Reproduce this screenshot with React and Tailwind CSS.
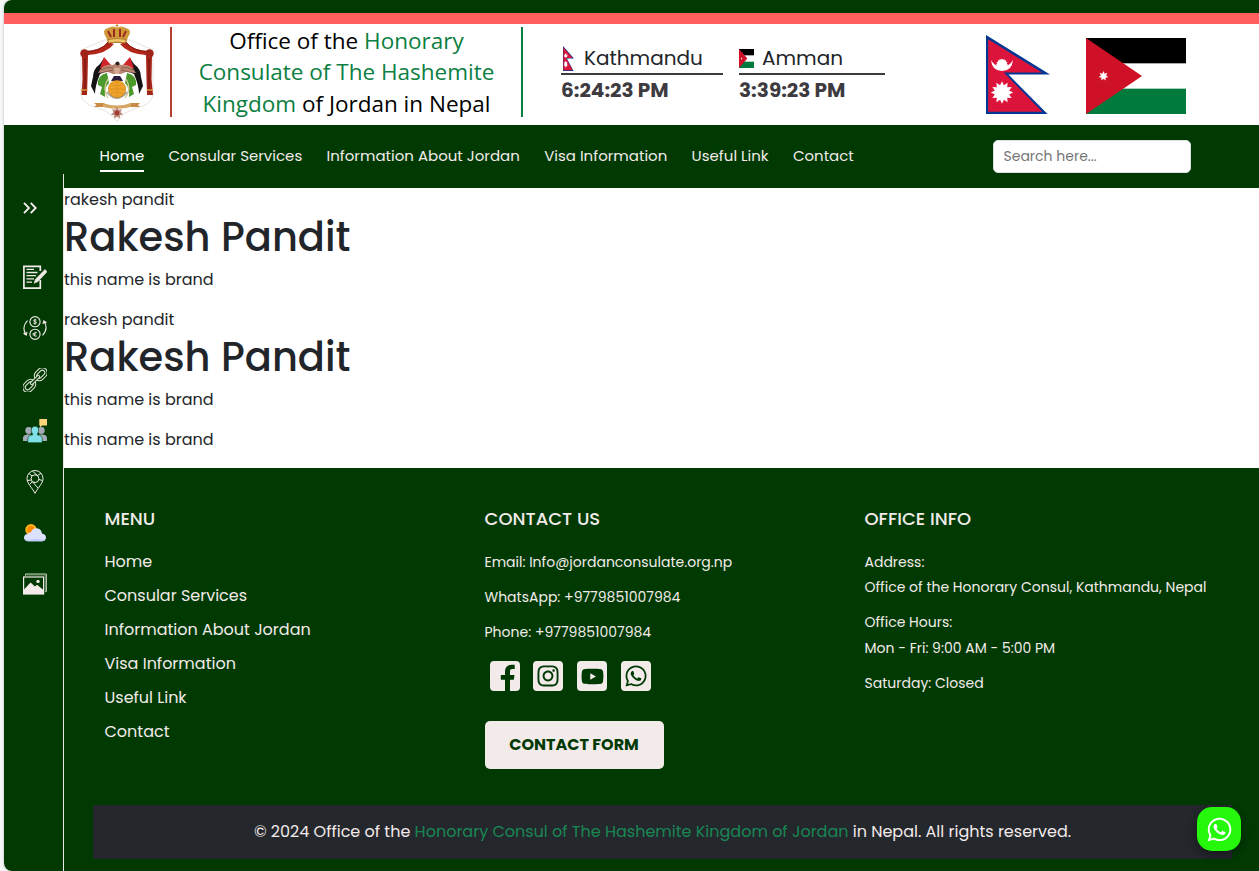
import { FaWhatsapp, FaYoutube, FaInstagram } from "react-icons/fa";

const navItems = [
  "Home",
  "Consular Services",
  "Information About Jordan",
  "Visa Information",
  "Useful Link",
  "Contact",
];

function starPoints(cx, cy, outer, inner, n) {
  return Array.from({ length: n * 2 }, (_, i) => {
    const r = i % 2 ? inner : outer;
    const a = (Math.PI * i) / n - Math.PI / 2;
    return `${(cx + r * Math.cos(a)).toFixed(2)},${(cy + r * Math.sin(a)).toFixed(2)}`;
  }).join(" ");
}

function NepalFlag({ className }) {
  return (
    <svg viewBox="0 0 64 79" preserveAspectRatio="none" className={className}>
      <path d="M0 0 L64 39.6 H22.5 L61.5 79 H0Z" fill="#003893" />
      <path d="M2.2 4.2 L56 37.6 H17.8 L56.3 76.8 H2.2Z" fill="#dc143c" />
      <path d="M5 25Q6 36 16 36Q26 36 27 25Q23.500 31.500 16 31.500Q8.500 31.500 5 25Z" fill="#fff" />
      <polygon points={starPoints(16, 29.500, 6, 4.800, 16)} fill="#fff" />
      <polygon points={starPoints(16, 57.5, 11.2, 7.4, 12)} fill="#fff" />
    </svg>
  );
}

function JordanFlag({ className }) {
  return (
    <svg viewBox="0 0 100 75" preserveAspectRatio="none" className={className}>
      <rect width="100" height="75" fill="#fff" />
      <rect width="100" height="25" fill="#000" />
      <rect y="50" width="100" height="25" fill="#007a3d" />
      <path d="M0 0 L56 37.5 L0 75Z" fill="#ce1126" />
      <polygon points={starPoints(17.5, 37.5, 5, 2.6, 7)} fill="#fff" />
    </svg>
  );
}

function CoatOfArms({ className }) {
  return (
    <svg viewBox="0 0 100 101" className={className}>
      {/* mantle outline */}
      <path
        d="M11 26V71Q13 80 25 83Q38 86 47 97Q56 86 70 83Q81 80 83 71V26L60 16H34Z"
        fill="#fff"
        stroke="#e6e4e0"
        strokeWidth="1"
      />
      {/* drapery */}
      <path d="M44 20Q36 30 18 31Q14 34 12 31L13 27Q31 27 38 18Z" fill="#b3261a" />
      <path d="M50 20Q58 30 76 31Q80 34 82 31L81 27Q63 27 56 18Z" fill="#b3261a" />
      <path d="M38 18Q32 27 14 28" stroke="#7d1710" fill="none" strokeWidth="0.9" />
      <path d="M56 18Q62 27 80 28" stroke="#7d1710" fill="none" strokeWidth="0.9" />
      <circle cx="14.5" cy="29.5" r="4.2" fill="#a02319" />
      <circle cx="79.5" cy="29.5" r="4.2" fill="#a02319" />
      <path d="M12 32H18L17.5 55L17 71H11.5L12.5 55Z" fill="#a52519" />
      <path d="M76 32H82L81.5 55L83 71H77L76.5 55Z" fill="#a52519" />
      <path d="M15 34V68M79 34V68" stroke="#6f1610" strokeWidth="1" />
      <path d="M11 66H17.500M77 66H83" stroke="#d8953c" strokeWidth="1.3" />
      {/* flags */}
      <path d="M34 34L40 46L30 50Q25 62 25 70L21 62L23 53Q23 45 30 40Z" fill="#151515" />
      <path d="M60 34L54 46L64 50Q69 62 69 70L73 62L71 53Q71 45 64 40Z" fill="#151515" />
      <path d="M34 33L30 44L36 46L41 41Z" fill="#d3242c" />
      <path d="M60 33L64 44L58 46L53 41Z" fill="#d3242c" />
      <path d="M37 49Q27 51 28 61L32 63L30 70L35 73Q34 64 39 59Z" fill="#4c9a2b" />
      <path d="M57 49Q67 51 66 61L62 63L64 70L59 73Q60 64 55 59Z" fill="#4c9a2b" />
      <path d="M38 55Q32 65 38 74M56 55Q62 65 55 74" stroke="#d9c9a0" strokeWidth="1.3" fill="none" />
      <path d="M37 68Q46 80 57 68" stroke="#a8a79d" strokeWidth="2" fill="none" />
      {/* eagle */}
      <path d="M28 49Q33 39 43 41L47 38L51 41Q61 39 66 49L56 48L51 50H43L38 48Z" fill="#b98671" />
      <path d="M31 46Q37 42 43 44M51 44Q57 42 63 46M34 48L43 46M51 46L60 48" stroke="#8b5a4a" strokeWidth="0.9" fill="none" />
      <circle cx="47.500" cy="39.500" r="2" fill="#2f2320" />
      <path d="M44 44H50L49 50H45Z" fill="#d8ab95" />
      {/* shield and globe */}
      <path d="M41 57L44 52H50L53 57Z" fill="#2b1d3c" />
      <circle cx="47" cy="65" r="8.600" fill="#efa32b" stroke="#c77a16" strokeWidth="0.7" />
      <path d="M39 65H55M47 57V73M41 60Q47 64 53 60M41 70Q47 66 53 70" stroke="#d88918" strokeWidth="0.6" fill="none" />
      {/* ribbon and star order */}
      <path d="M24 79H34V83H24L26.500 81ZM60 79H70L68 81L70 83H60Z" fill="#c98a45" />
      <path d="M33 79Q47 84 61 79V83Q47 86.500 33 83Z" fill="#d6a664" />
      <polygon points={starPoints(47, 89, 6.2, 3.6, 7)} fill="#b98879" />
      <circle cx="47" cy="89" r="2.400" fill="#a63b36" />
      {/* crown */}
      <path d="M36 13Q31 6 38 4Q44 1 47 4Q50 1 56 4Q63 6 58 13L56 19H38Z" fill="#d09a3b" />
      <path d="M38 7L41 13M44 5V13M50 5V13M56 7L53 13" stroke="#9b2a1e" strokeWidth="2" />
      <path d="M38 15.500Q47 13.500 56 15.500L55.500 19Q47 17 38.500 19Z" fill="#f0c568" stroke="#8e5820" strokeWidth="0.600" />
      <path d="M47 0V4M45.500 1.500H48.500" stroke="#c48a35" strokeWidth="1" />
    </svg>
  );
}

const cream = "#f3eaea";

function ApplyIcon() {
  return (
    <svg viewBox="0 0 24 24" className="size-6" fill="none" stroke={cream}>
      <path d="M17.300 6V1.300H0.900V23.200H17.300V15" strokeWidth="1.700" />
      <path d="M3.500 4.300H11M3.500 7.500H14.500M3.500 10.700H13M3.500 13.900H11M3.500 17.100H9" strokeWidth="1.300" />
      <path d="M22 4.500L24 6.800L15 16.500L11 18.200L12.500 14.200Z" fill={cream} strokeWidth="0.600" />
    </svg>
  );
}

function CurrencyIcon() {
  return (
    <svg viewBox="0 0 24 24" className="size-6" fill="none" stroke={cream} strokeWidth="1.100">
      <circle cx="12" cy="5.700" r="5.100" />
      <circle cx="12" cy="18.300" r="5.100" />
      <path d="M13.500 4.200Q12 3 10.700 4.200Q10.300 5.500 12 5.700Q13.800 6 13.300 7.200Q12 8.500 10.400 7.200M12 2.800V8.700" strokeWidth="0.900" />
      <path d="M13.800 16.600Q11.500 15.300 10.800 18.300Q11.500 21.300 13.800 20M9.600 17.700H12.800M9.600 18.900H12.800" strokeWidth="0.900" />
      <path d="M4.500 4.500Q-1.800 11.500 3 18.600M0.500 17.200L3.200 19L4 16" />
      <path d="M19.500 19.500Q25.800 12.500 21 5.400M23.500 6.800L20.800 5L20 8" />
    </svg>
  );
}

function ChainIcon() {
  return (
    <svg viewBox="0 0 24 24" className="mt-px -mb-px size-6" fill="none" stroke="#dfe2d6" strokeWidth="1.050">
      <g transform="rotate(-45 12 12)">
        <rect x="-3.300" y="7" width="14.300" height="10" rx="5" />
        <rect x="-0.800" y="9.600" width="9.300" height="4.800" rx="2.400" />
        <rect x="13" y="7" width="14.300" height="10" rx="5" />
        <rect x="15.500" y="9.600" width="9.300" height="4.800" rx="2.400" />
        <rect x="6" y="10.700" width="12" height="2.600" rx="1.300" fill="#003a02" />
      </g>
    </svg>
  );
}

function PeopleIcon() {
  return (
    <svg viewBox="0 0 24 24" className="size-6">
      <path d="M16.300 0H24V6.500H19L17 8.500V6.500H16.300Z" fill="#ffd577" />
      <g fill="#a3abb8">
        <circle cx="5.700" cy="11.500" r="3.400" />
        <circle cx="18.300" cy="11.500" r="3.400" />
        <path d="M0 22V18.500Q0.500 16 4 15.500H8V22ZM24 22V18.500Q23.500 16 20 15.500H16V22Z" />
      </g>
      <path
        d="M12 7.200C14.500 7.200 15.800 9 15.600 11.300C15.500 13.500 14.500 14.500 14.300 15.800Q19 16.500 19.200 19.500V23.700H4.800V19.500Q5 16.500 9.700 15.800C9.500 14.500 8.500 13.500 8.400 11.300C8.200 9 9.500 7.200 12 7.200Z"
        fill="#7fe0e8"
        stroke="#003a02"
        strokeWidth="0.600"
      />
    </svg>
  );
}

function PlaceIcon() {
  return (
    <svg viewBox="0 0 24 24" className="size-6" fill="none" stroke={cream} strokeWidth="1">
      <path d="M12 23.300C9 17.500 4 13.500 4 8.500A8 8 0 0 1 20 8.500C20 13.500 15 17.500 12 23.300Z" />
      <circle cx="12" cy="8.700" r="3.900" />
      <path d="M6 3.500L9 6M4.200 10.500L8.300 10M9.500 1.200L14.500 5.500L18 3.200M15.800 9.500L19.500 10.500M9.500 11.800L15 18M9 12L6.500 14.500" />
    </svg>
  );
}

function WeatherIcon() {
  return (
    <svg viewBox="0 0 24 24" className="size-6">
      <circle cx="8" cy="8.700" r="5.700" fill="#ffb31a" />
      <circle cx="8" cy="8.700" r="3.800" fill="#ff8a00" />
      <path
        d="M5 20.300C2.500 20.300 1 18.500 1 16.600C1 14.500 2.700 12.900 4.800 13C5.500 12 6.500 11.500 7.800 11.600C8.500 9 10.500 7.300 13.200 7.300C16.500 7.300 18.800 9.500 18.900 12.600C21.300 12.900 23 14.400 23 16.500C23 18.700 21.300 20.300 19 20.300Z"
        fill="#dbe2ff"
      />
      <path d="M1.500 18Q8 19.500 12 17.500Q17 19 22.500 18Q21.500 20.300 19 20.300H5Q2.500 20.300 1.500 18Z" fill="#c3ccfb" />
    </svg>
  );
}

function GalleryIcon() {
  return (
    <svg viewBox="0 0 24 24" className="size-6" fill="none">
      <path d="M2.500 3.800V2H23.400V19.500H22M1.500 5" stroke="#c9cfc0" strokeWidth="1" />
      <path d="M3.500 2.900H22.300V20.300" stroke="#8ca58a" strokeWidth="0.900" />
      <rect x="0.600" y="5" width="20" height="17" stroke={cream} strokeWidth="1.200" />
      <path d="M1 17.500L7.500 10.500L12 14.500L14 12.800L20.500 18V22H1Z" fill={cream} />
      <circle cx="15" cy="9.400" r="1.700" fill={cream} />
    </svg>
  );
}

const sideIcons = [ApplyIcon, CurrencyIcon, ChainIcon, PeopleIcon, PlaceIcon, WeatherIcon, GalleryIcon];

function Clock({ flag, city, time, className }) {
  return (
    <div className={className}>
      <div className="flex h-[31px] items-center border-b-2 border-[#3d3a40] text-[20px] leading-[27px] text-[#212529]">
        {flag}
        <span>{city}</span>
      </div>
      <div className="text-[20px] leading-[30px] font-bold text-[#3d3a40]">{time}</div>
    </div>
  );
}

function Header() {
  return (
    <header>
      <div className="h-[13px] bg-[#003a02]" />
      <div className="h-[11px] bg-[#ff5f5f]" />
      <div className="flex h-[101px] bg-white pl-[66px]">
        <CoatOfArms className="h-[101px] w-[100px]" />
        <div className="mt-[3px] h-[90px] w-[2px] bg-[#b5402f]" />
        <h2 className="mt-[1px] w-[349px] text-center font-['Open_Sans',sans-serif] text-[22.500px] leading-[31.4px] text-black">
          Office of the <span className="text-[#0b7f42]">Honorary</span>
          <br />
          <span className="text-[#0b7f42]">Consulate of The Hashemite</span>
          <br />
          <span className="text-[#0b7f42]">Kingdom</span> of Jordan in Nepal
        </h2>
        <div className="mt-[3px] h-[90px] w-[2px] bg-[#0b7f42]" />
        <div className="flex gap-4 pt-5 pl-[38px]">
          <Clock
            className="w-[162px]"
            flag={<NepalFlag className="mr-[10px] ml-[2px] h-[25px] w-[11px]" />}
            city="Kathmandu"
            time="6:24:23 PM"
          />
          <Clock
            className="w-[146px]"
            flag={<JordanFlag className="mr-2 h-[19px] w-[15px]" />}
            city="Amman"
            time="3:39:23 PM"
          />
        </div>
        <div className="flex pl-[101px]">
          <NepalFlag className="mt-[11px] h-[79px] w-[64px]" />
          <JordanFlag className="mt-[14px] ml-9 h-[76px] w-[100px]" />
        </div>
      </div>
      <nav className="flex h-[63px] items-center bg-[#003a02] pr-[68px] pl-[95.500px]">
        <ul className="flex gap-[24.300px]">
          {navItems.map((item, i) => (
            <li
              key={item}
              className={
                i === 0
                  ? "border-b-2 border-white pt-[4px] pb-[3px] text-[15px] leading-[22px] text-white"
                  : "pt-[4px] pb-[3px] text-[15px] leading-[22px] text-[#f3eaea]"
              }
            >
              {item}
            </li>
          ))}
        </ul>
        <input
          placeholder="Search here..."
          className="ml-auto h-[33px] w-[198px] rounded-[5px] border border-[#dee2e6] bg-white px-[9.500px] text-[14px] text-[#212529] placeholder:text-[#757575]"
        />
      </nav>
    </header>
  );
}

function Sidebar() {
  return (
    <aside className="-mt-[14px] flex w-[60px] shrink-0 flex-col items-center border-r border-white/90 bg-[#003a02] pt-[28px]">
      <svg viewBox="0 0 14 12" className="mr-[8px] h-3 w-[14px]" fill="none" stroke={cream} strokeWidth="1.900">
        <path d="M1 0.800L6 6L1 11.200M7.700 0.800L12.700 6L7.700 11.200" />
      </svg>
      <div className="mt-[51px] flex flex-col gap-[27.200px] pl-[2px]">
        {sideIcons.map((Icon, i) => (
          <Icon key={i} />
        ))}
      </div>
    </aside>
  );
}

function SocialTile({ children }) {
  return <div className="flex size-[30px] items-center justify-center rounded bg-[#f3eaea]">{children}</div>;
}

function Footer() {
  return (
    <footer className="h-[403px] bg-[#003a02] pt-[40px] text-[#f3eaea]">
      <div className="flex h-[297px] pl-[40.500px]">
        <div className="w-[380px]">
          <h5 className="text-[18px] leading-[22px] font-medium">MENU</h5>
          <ul className="mt-[20px] flex flex-col gap-[10px]">
            {navItems.map((item) => (
              <li key={item} className="leading-6">
                {item}
              </li>
            ))}
          </ul>
        </div>
        <div className="w-[380px] text-[14px] leading-[25px]">
          <h5 className="text-[18px] leading-[22px] font-medium">CONTACT US</h5>
          <div className="mt-[20px] flex flex-col gap-[10px]">
            <p>Email: Info@jordanconsulate.org.np</p>
            <p>WhatsApp: +9779851007984</p>
            <p>Phone: +9779851007984</p>
          </div>
          <div className="mt-[16px] flex gap-[13.700px] pl-[5.200px]">
            <SocialTile>
              <svg viewBox="0 0 30 30" className="size-[30px]">
                <path
                  d="M15 30V18.700H10.800V14H15V10.500C15 6 17.500 3.800 21.500 3.800H24.700V8H22.400C20.600 8 20 8.800 20 10.400V14H24.500L23.800 18.700H20V30Z"
                  fill="#003a02"
                />
              </svg>
            </SocialTile>
            <SocialTile>
              <FaInstagram className="size-6 text-[#003a02]" />
            </SocialTile>
            <SocialTile>
              <FaYoutube className="size-[23px] text-[#003a02]" />
            </SocialTile>
            <SocialTile>
              <FaWhatsapp className="size-6 text-[#003a02]" />
            </SocialTile>
          </div>
          <button className="mt-[30px] h-12 w-[179px] rounded-[5px] bg-[#f3eaea] pb-[2px] text-[16px] font-bold text-[#003a02]">
            CONTACT FORM
          </button>
        </div>
        <div className="text-[14px] leading-[25.500px]">
          <h5 className="text-[18px] leading-[22px] font-medium">OFFICE INFO</h5>
          <div className="mt-[19.600px] flex flex-col gap-[9.700px]">
            <p>
              Address:
              <br />
              Office of the Honorary Consul, Kathmandu, Nepal
            </p>
            <p>
              Office Hours:
              <br />
              Mon - Fri: 9:00 AM - 5:00 PM
            </p>
            <p>Saturday: Closed</p>
          </div>
        </div>
      </div>
      <div className="ml-[29px] flex h-[54px] w-[1139px] items-center justify-center bg-[#24272c]">
        <p>
          © 2024 Office of the <span className="text-[#198754]">Honorary Consul of The Hashemite Kingdom of Jordan</span>{" "}
          in Nepal. All rights reserved.
        </p>
      </div>
    </footer>
  );
}

export default function App() {
  return (
    <div className="h-[871px] overflow-hidden bg-[#f5f7f9] pl-1 font-['Poppins','Inter',sans-serif] text-[16px] leading-6">
      <div className="h-full overflow-hidden rounded-l-lg bg-white shadow-[0_0_3px_rgba(0,0,0,0.25)]">
        <Header />
        <div className="flex h-[683px]">
          <Sidebar />
          <main className="flex-1 text-[#212529]">
            <p>rakesh pandit</p>
            <h1 className="mb-[6px] text-[40px] leading-[50px] font-medium">Rakesh Pandit</h1>
            <p className="mb-4">this name is brand</p>
            <p>rakesh pandit</p>
            <h1 className="mb-[6px] text-[40px] leading-[50px] font-medium">Rakesh Pandit</h1>
            <p className="mb-4">this name is brand</p>
            <p className="mb-4">this name is brand</p>
            <Footer />
          </main>
        </div>
      </div>
      <div className="fixed right-[18px] bottom-[20px] flex size-11 items-center justify-center rounded-[15px] bg-[#25f80b] shadow-[0_4px_12px_rgba(0,0,0,0.4)]">
        <FaWhatsapp className="size-[27px] text-white" />
      </div>
    </div>
  );
}
